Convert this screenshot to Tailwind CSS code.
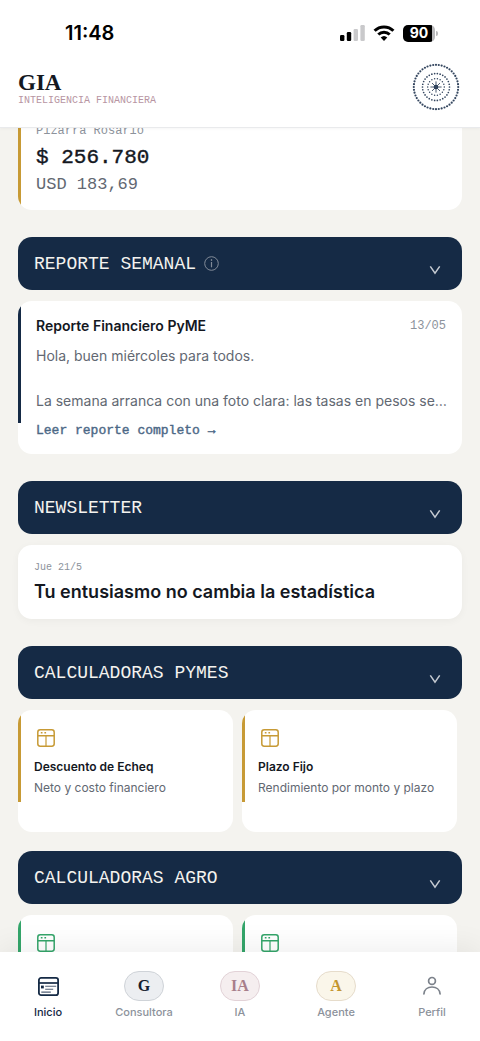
<!DOCTYPE html>
<html lang="es">
<head>
<meta charset="utf-8">
<meta name="viewport" content="width=device-width, initial-scale=1">
<title>GIA</title>
<script src="https://cdn.jsdelivr.net/npm/@tailwindcss/browser@4"></script>
</head>
<body class="flex h-screen flex-col overflow-hidden bg-[#f4f3ef] font-['Inter',sans-serif] text-[#14181f]">
<svg class="hidden" aria-hidden="true">
  <symbol id="calc" viewBox="0 0 18 18"><g fill="none" stroke="currentColor" stroke-width="1.5"><rect x=".8" y=".8" width="16.4" height="16.4" rx="2.4"/><path d="M.8 6.700h16.400"/><path d="M9 7v10" stroke-width="1.200"/></g><path d="M3.800 2.900h1.700v1.700H3.800zM7.400 2.900h1.700v1.700H7.400z" fill="currentColor"/></symbol>
  <symbol id="chev" viewBox="0 0 12 10"><path d="M1.300 1.300 6 8.200l4.700-6.900" fill="none" stroke="currentColor" stroke-width="1.500"/></symbol>
</svg>

<header class="z-10 shrink-0 border-b border-[#e9eaec] bg-white shadow-[0_1px_3px_rgba(0,0,0,0.04)]">
  <div class="mt-[15px] flex h-9 items-center justify-between pr-[42px] pl-[65px]">
    <time class="text-xl leading-6 font-semibold text-black">11:48</time>
    <div class="flex items-center gap-2">
      <svg class="h-4 w-[25px]" viewBox="0 0 25 16" aria-label="Señal"><g fill="#000"><rect y="10" width="4.400" height="6" rx="1.200"/><rect x="6.800" y="7" width="4.400" height="9" rx="1.200"/></g><g fill="#c9c9cb"><rect x="13.600" y="4" width="4.400" height="12" rx="1.200"/><rect x="20.400" y="0" width="4.400" height="16" rx="1.200"/></g></svg>
      <svg class="h-4 w-[22px]" viewBox="0 0 22 16" aria-label="Wifi"><path d="M1.600 5.800a13.300 13.300 0 0 1 18.800 0M5.300 9.500a8.200 8.200 0 0 1 11.400 0" fill="none" stroke="#000" stroke-width="3"/><path d="M11 16 7.700 12.600a4.800 4.800 0 0 1 6.600 0z"/></svg>
      <div class="flex items-center gap-px">
        <div class="flex h-[17px] w-8 items-center justify-center rounded-[5px] bg-linear-to-r from-black from-90% to-[#b9b9bb] to-90% text-sm leading-none font-bold text-white">90</div>
        <div class="h-[5px] w-0.5 rounded-r-full bg-[#b9b9bb]"></div>
      </div>
    </div>
  </div>
  <div class="flex items-center justify-between px-[18px] pt-3 pb-4">
    <div class="pt-[3px]">
      <h1 class="font-['Liberation_Serif',serif] text-[23px] leading-6 font-bold">GIA</h1>
      <p class="font-['Liberation_Mono',monospace] text-[10px] leading-3 text-[#b795a2]">INTELIGENCIA FINANCIERA</p>
    </div>
    <svg class="mr-0.5 size-12" viewBox="-24 -24 48 48" fill="none" stroke="#34465f" stroke-linecap="round" aria-label="GIA"><circle r="22.200" stroke-width="2.200" pathLength="48" stroke-dasharray="0 1"/><circle r="13.500" stroke-width="1.700" pathLength="30" stroke-dasharray="0 1"/><circle r="8.300" stroke-width="1.500" pathLength="18" stroke-dasharray="0 1"/><circle r="2.300" fill="#263b58" stroke="none"/><path d="M-5.200 0H5.200M0-5.200V5.200M-3.700-3.700l7.400 7.400M3.700-3.700l-7.400 7.400" stroke-width=".9"/></svg>
  </div>
</header>

<main class="min-h-0 flex-1 overflow-hidden px-[18px]">
  <section class="relative -mt-5 overflow-hidden rounded-[14px] bg-white pt-[15px] pr-4 pb-3.5 pl-[18px] font-['Liberation_Mono',monospace]">
    <span class="absolute inset-y-0 left-0 w-[3px] bg-[#c79a35]"></span>
    <p class="text-xs leading-4 text-[#8c929b]">Pizarra Rosario</p>
    <p class="mt-[5px] text-[21px] leading-7 text-[#14181f] [-webkit-text-stroke:0.4px]">$ 256.780</p>
    <p class="mt-0.5 text-[17px] leading-[22px] text-[#626872]">USD 183,69</p>
  </section>

  <section class="mt-[27px]">
    <button class="flex h-[53px] w-full items-center justify-between rounded-[14px] bg-[#152a45] pr-[21px] pl-4 text-left font-['Liberation_Mono',monospace] text-lg text-[#f4f3ef]">
      <span class="flex items-center gap-2">REPORTE SEMANAL
        <svg class="size-[15px] text-[#828b98]" viewBox="0 0 15 15" fill="none" stroke="currentColor" stroke-width="1"><circle cx="7.500" cy="7.500" r="6.800"/><path d="M7.500 6v5.300" stroke-width="1.200"/><circle cx="7.500" cy="4" r=".5" fill="currentColor"/></svg></span>
      <svg class="mt-3 h-2.5 w-3 text-[#c5cad1]"><use href="#chev"/></svg>
    </button>
    <article class="relative mt-[11px] overflow-hidden rounded-[14px] bg-white pt-3.5 pr-4 pb-3 pl-[18px]">
      <span class="absolute top-0 left-0 h-4/5 w-[3px] bg-[#152a45]"></span>
      <div class="flex items-center justify-between">
        <h2 class="text-sm leading-[22px] font-semibold">Reporte Financiero PyME</h2>
        <time class="font-['Liberation_Mono',monospace] text-xs leading-[22px] text-[#8c929b]">13/05</time>
      </div>
      <p class="mt-2 text-sm leading-[22px] text-[#626872]">Hola, buen miércoles para todos.</p>
      <p class="mt-[23px] text-sm leading-[22px] whitespace-nowrap text-[#626872]">La semana arranca con una foto clara: las tasas en pesos se…</p>
      <a href="#" class="mt-2 block font-['Liberation_Mono',monospace] text-[13px] leading-[22px] text-[#4c6886] [-webkit-text-stroke:0.4px]">Leer reporte completo →</a>
    </article>
  </section>

  <section class="mt-[27px]">
    <button class="flex h-[53px] w-full items-center justify-between rounded-[14px] bg-[#152a45] pr-[21px] pl-4 text-left font-['Liberation_Mono',monospace] text-lg text-[#f4f3ef]">NEWSLETTER
      <svg class="mt-3 h-2.5 w-3 text-[#c5cad1]"><use href="#chev"/></svg>
    </button>
    <article class="mt-[11px] rounded-[14px] bg-white px-4 pt-[15px] pb-[15px] shadow-[0_2px_8px_rgba(0,0,0,0.04)]">
      <time class="block font-['Liberation_Mono',monospace] text-[10px] leading-4 text-[#8c929b]">Jue 21/5</time>
      <h2 class="mt-1 text-lg leading-6 font-semibold">Tu entusiasmo no cambia la estadística</h2>
    </article>
  </section>

  <section class="mt-[27px]">
    <button class="flex h-[53px] w-full items-center justify-between rounded-[14px] bg-[#152a45] pr-[21px] pl-4 text-left font-['Liberation_Mono',monospace] text-lg text-[#f4f3ef]">CALCULADORAS PYMES
      <svg class="mt-3 h-2.5 w-3 text-[#c5cad1]"><use href="#chev"/></svg>
    </button>
    <div class="mt-[11px] mr-[5px] grid grid-cols-2 gap-[9px]">
      <a href="#" class="relative block min-h-[122px] overflow-hidden rounded-[14px] bg-white px-4 pt-[19px]">
        <span class="absolute top-0 left-0 h-3/4 w-[3px] bg-[#c79a35]"></span>
        <svg class="ml-[3px] size-[18px] text-[#c79a35]"><use href="#calc"/></svg>
        <h3 class="mt-[11px] text-xs leading-[18px] font-semibold">Descuento de Echeq</h3>
        <p class="mt-1 text-xs leading-4 whitespace-nowrap text-[#626872]">Neto y costo financiero</p>
      </a>
      <a href="#" class="relative block min-h-[122px] overflow-hidden rounded-[14px] bg-white px-4 pt-[19px]">
        <span class="absolute top-0 left-0 h-3/4 w-[3px] bg-[#c79a35]"></span>
        <svg class="ml-[3px] size-[18px] text-[#c79a35]"><use href="#calc"/></svg>
        <h3 class="mt-[11px] text-xs leading-[18px] font-semibold">Plazo Fijo</h3>
        <p class="mt-1 text-xs leading-4 whitespace-nowrap text-[#626872]">Rendimiento por monto y plazo</p>
      </a>
    </div>
  </section>

  <section class="mt-[19px]">
    <button class="flex h-[53px] w-full items-center justify-between rounded-[14px] bg-[#152a45] pr-[21px] pl-4 text-left font-['Liberation_Mono',monospace] text-lg text-[#f4f3ef]">CALCULADORAS AGRO
      <svg class="mt-3 h-2.5 w-3 text-[#c5cad1]"><use href="#chev"/></svg>
    </button>
    <div class="mt-[11px] mr-[5px] grid grid-cols-2 gap-[9px]">
      <a href="#" aria-label="Calculadora agro" class="relative block min-h-[122px] overflow-hidden rounded-[14px] bg-white px-4 pt-[19px]">
        <span class="absolute top-0 left-0 h-3/4 w-[3px] bg-[#34a56a]"></span>
        <svg class="ml-[3px] size-[18px] text-[#34a56a]"><use href="#calc"/></svg>
      </a>
      <a href="#" aria-label="Calculadora agro" class="relative block min-h-[122px] overflow-hidden rounded-[14px] bg-white px-4 pt-[19px]">
        <span class="absolute top-0 left-0 h-3/4 w-[3px] bg-[#34a56a]"></span>
        <svg class="ml-[3px] size-[18px] text-[#34a56a]"><use href="#calc"/></svg>
      </a>
    </div>
  </section>
</main>

<nav class="z-10 grid shrink-0 grid-cols-5 bg-white pt-[19px] pb-[21px] text-center text-[11px] leading-[15px] font-medium text-[#8c929b] shadow-[0_-4px_30px_rgba(0,0,0,0.07)]">
  <a href="#" class="flex flex-col items-center gap-1 text-[#152a45]">
    <span class="flex h-[30px] items-center"><svg class="h-[19px] w-[21px]" viewBox="0 0 21 19" fill="none" stroke="currentColor"><rect x=".9" y=".9" width="19.200" height="17.200" rx="2.200" stroke-width="1.800"/><path d="M1 6h19" stroke-width="1.700"/><path d="M7.200 9.300h11M7.200 12.200h8M3.300 15.100h9.500" stroke-width="1.100" opacity=".75"/><rect x="3" y="8.600" width="2.800" height="2.800" fill="currentColor" stroke="none"/></svg></span>Inicio</a>
  <a href="#" class="flex flex-col items-center gap-1"><span class="flex h-[30px] w-10 items-center justify-center rounded-full border border-[#cfd3d8] bg-[#eceef1] font-['Liberation_Serif',serif] text-base font-bold text-[#14202f]">G</span>Consultora</a>
  <a href="#" class="flex flex-col items-center gap-1"><span class="flex h-[30px] w-10 items-center justify-center rounded-full border border-[#e2d2d7] bg-[#f5eeef] font-['Liberation_Serif',serif] text-base font-bold text-[#a87f8b]">IA</span>IA</a>
  <a href="#" class="flex flex-col items-center gap-1"><span class="flex h-[30px] w-10 items-center justify-center rounded-full border border-[#e6dccb] bg-[#faf6ea] font-['Liberation_Serif',serif] text-base font-bold text-[#c4962f]">A</span>Agente</a>
  <a href="#" class="flex flex-col items-center gap-1"><span class="flex h-[30px] items-center"><svg class="h-5 w-[18px]" viewBox="0 0 18 19" fill="none" stroke="#7c828b" stroke-width="1.700" stroke-linecap="round"><circle cx="9" cy="4.400" r="3.400"/><path d="M.9 17.500c.3-4.400 3.800-7 8.100-7s7.800 2.600 8.100 7"/></svg></span>Perfil</a>
</nav>
</body>
</html>
